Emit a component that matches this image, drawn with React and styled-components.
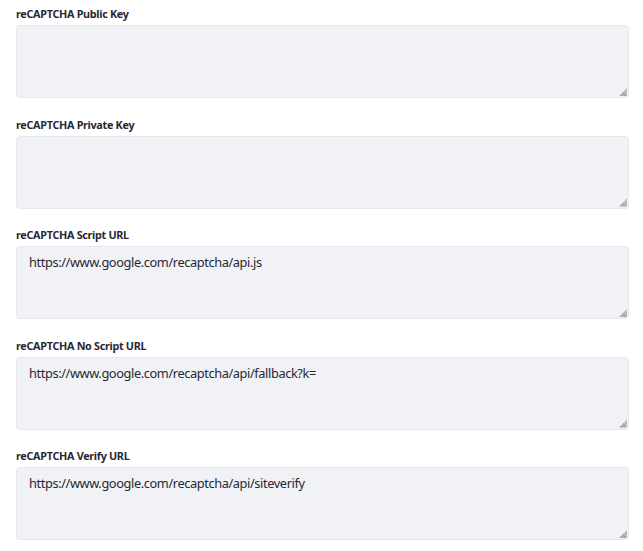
import React from "react";
import styled, { createGlobalStyle } from "styled-components";

const Global = createGlobalStyle`
  html, body { margin: 0; padding: 0; background: #fff; }
  body { font-family: "Noto Sans", "Open Sans", sans-serif; color: #272833; }
`;

const Page = styled.div`
  display: flex;
  flex-direction: column;
  padding: 7px 14px 0 16px;
`;

const Group = styled.div`
  display: flex;
  flex-direction: column;
  margin-bottom: 19.5px;
`;

const Label = styled.label`
  font-size: 10.8px;
  font-weight: 700;
  line-height: 14px;
  letter-spacing: -0.3px;
  color: #272833;
  margin-bottom: 4px;
`;

const AreaWrap = styled.div`
  position: relative;
  display: flex;
`;

const Area = styled.textarea`
  box-sizing: border-box;
  width: 100%;
  height: 73px;
  background: #f1f2f5;
  border: 1px solid #e7e7ed;
  border-radius: 4px;
  padding: 6px 12px;
  font-family: "Noto Sans", "Open Sans", sans-serif;
  font-size: 12.8px;
  letter-spacing: -0.4px;
  line-height: 18px;
  color: #272833;
  resize: none;
  outline: none;
`;

const Grip = styled.span`
  position: absolute;
  right: 2px;
  bottom: 2px;
  width: 8px;
  height: 8px;
  clip-path: polygon(100% 0, 100% 100%, 0 100%);
  background: repeating-linear-gradient(
    45deg,
    #9c9da6 0px,
    #9c9da6 1px,
    #c4c5cc 1px,
    #c4c5cc 2px
  );
  pointer-events: none;
`;

const fields = [
  { label: "reCAPTCHA Public Key", value: "" },
  { label: "reCAPTCHA Private Key", value: "" },
  { label: "reCAPTCHA Script URL", value: "https://www.google.com/recaptcha/api.js" },
  { label: "reCAPTCHA No Script URL", value: "https://www.google.com/recaptcha/api/fallback?k=" },
  { label: "reCAPTCHA Verify URL", value: "https://www.google.com/recaptcha/api/siteverify" },
];

export default function App() {
  return (
    <>
      <Global />
      <Page>
        {fields.map((f) => (
          <Group key={f.label}>
            <Label>{f.label}</Label>
            <AreaWrap>
              <Area defaultValue={f.value} />
              <Grip />
            </AreaWrap>
          </Group>
        ))}
      </Page>
    </>
  );
}
